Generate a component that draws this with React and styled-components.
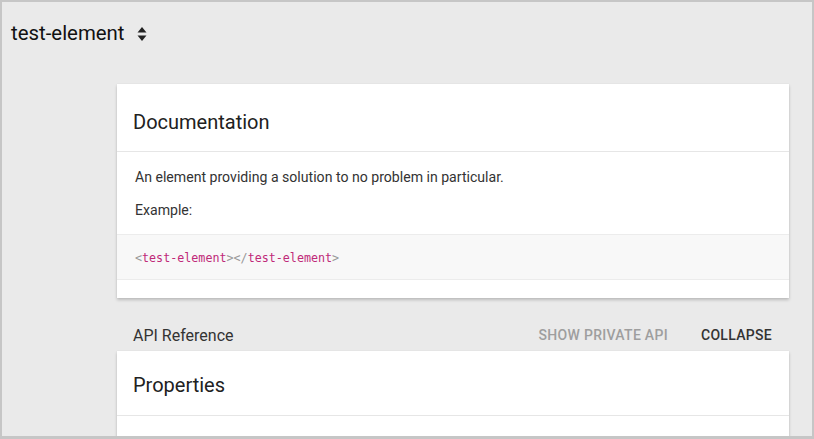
import React from 'react';
import styled, { createGlobalStyle } from 'styled-components';

const GlobalStyle = createGlobalStyle`
  html, body {
    margin: 0;
    padding: 0;
    background: #c6c6c6;
  }
  body {
    font-family: Roboto, "Liberation Sans", sans-serif;
    color: #212121;
  }
`;

const Frame = styled.div`
  box-sizing: border-box;
  height: 439px;
  overflow: hidden;
  border: 2px solid #c6c6c6;
  border-bottom-width: 3px;
  background: #eaeaea;
`;

const Header = styled.header`
  display: flex;
  align-items: center;
  gap: 12px;
  height: 62px;
  padding: 0 0 0 9px;
`;

const ElementName = styled.span`
  font-size: 20.4px;
  color: #111;
`;

const Sorter = styled.svg`
  width: 10px;
  height: 16px;
  margin-top: 1px;
`;

const Main = styled.main`
  width: 672px;
  margin: 20px 0 0 115px;
`;

const Card = styled.section`
  background: #fff;
  box-shadow: 0 2px 3px rgba(0, 0, 0, 0.2), 0 0 1px rgba(0, 0, 0, 0.08);
`;

const CardTitle = styled.h2`
  margin: 0;
  padding: ${(p) => p.$pad || '24px 16px 0'};
  height: ${(p) => p.$height}px;
  box-sizing: border-box;
  font-size: 20px;
  line-height: 28px;
  font-weight: 400;
  color: #212121;
  border-bottom: 1px solid #e6e6e6;
`;

const CardBody = styled.div`
  padding: 15px 0 18px;
`;

const Para = styled.p`
  margin: 0 18px 13px;
  font-size: 14.1px;
  line-height: 20px;
  color: #333;
`;

const Code = styled.pre`
  margin: 14px 0 0;
  padding: 14px 18px 12px;
  background: #f8f8f8;
  border-top: 1px solid #ececec;
  border-bottom: 1px solid #ececec;
  font-family: "DejaVu Sans Mono", "Liberation Mono", monospace;
  font-size: 11.7px;
  line-height: 18px;
  color: #999;
`;

const Tag = styled.span`
  color: #c02a78;
`;

const ApiBar = styled.div`
  display: flex;
  align-items: center;
  height: 32px;
  margin-top: 21px;
  padding: 0 17px 0 16px;
`;

const ApiTitle = styled.span`
  flex: 1;
  font-size: 16px;
  color: #333;
`;

const ApiButton = styled.button`
  border: 0;
  background: none;
  padding: 0;
  margin-left: 33px;
  font-family: inherit;
  font-size: 14px;
  font-weight: 500;
  letter-spacing: 0.3px;
  text-transform: uppercase;
  color: ${(p) => (p.$muted ? '#9e9e9e' : '#333')};
  cursor: pointer;
`;

const PropList = styled.div`
  height: 40px;
`;

export default function App() {
  return (
    <>
      <GlobalStyle />
      <Frame>
        <Header>
          <ElementName>test-element</ElementName>
          <Sorter viewBox="0 0 10 16">
            <path d="M5 1 L9.5 6.5 H0.5 Z" fill="#222" />
            <path d="M5 15 L9.5 9.5 H0.5 Z" fill="#222" />
          </Sorter>
        </Header>
        <Main>
          <Card>
            <CardTitle $height={68} $pad="24px 16px 0">
              Documentation
            </CardTitle>
            <CardBody>
              <Para>An element providing a solution to no problem in particular.</Para>
              <Para>Example:</Para>
              <Code>
                &lt;<Tag>test-element</Tag>&gt;&lt;/<Tag>test-element</Tag>&gt;
              </Code>
            </CardBody>
          </Card>
          <ApiBar>
            <ApiTitle>API Reference</ApiTitle>
            <ApiButton $muted>Show private API</ApiButton>
            <ApiButton>Collapse</ApiButton>
          </ApiBar>
          <Card>
            <CardTitle $height={65} $pad="20px 16px 0">
              Properties
            </CardTitle>
            <PropList />
          </Card>
        </Main>
      </Frame>
    </>
  );
}
